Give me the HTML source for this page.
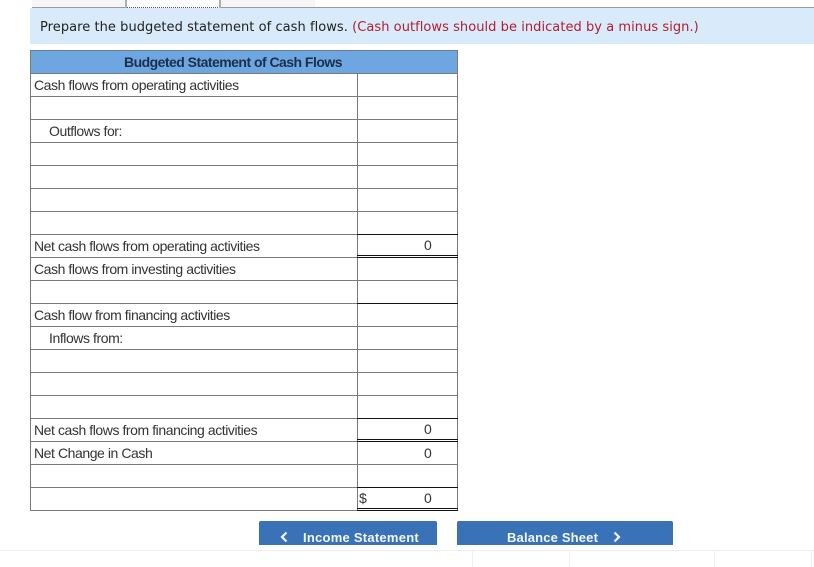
<!DOCTYPE html>
<html><head><meta charset="utf-8">
<style>
html,body{margin:0;padding:0;background:#fff;width:814px;height:567px;overflow:hidden}
div{position:absolute}
.h{height:1px;background:#7a7a7a;left:30px;width:428px}
.hl{height:1px;background:#7a7a7a;left:30px;width:327px}
.k{height:1px;background:#111;left:357px;width:101px}
.v{width:1px;background:#7a7a7a}
.t{font:14px/18px "Liberation Sans",sans-serif;color:#333;white-space:nowrap;letter-spacing:-.43px}
.n{font:14px/18px "Liberation Sans",sans-serif;color:#333;left:424px}
.b{background:#3a72b8;color:#f2f6fb;font:bold 13px/16px "Liberation Sans",sans-serif;white-space:nowrap}
</style></head><body>
<!-- top tabs -->
<div style="left:32px;top:0;width:283px;height:7px;background:#f6f6f6;border-bottom:1px solid #9a9a9a"></div>
<div style="left:126px;top:0;width:94px;height:7px;background:#fff;border-bottom:1px dotted #456"></div>
<div style="left:125px;top:0;width:2px;height:8px;background:#a5b0b0"></div>
<div style="left:219px;top:0;width:2px;height:8px;background:#a5b0b0"></div>
<div style="left:315px;top:7px;width:499px;height:1px;background:#9a9a9a"></div>
<!-- instruction banner -->
<div style="left:30px;top:8px;width:784px;height:36px;background:#d9eafa"></div>
<div style="left:40px;top:19px;height:18px;font:13px/18px 'DejaVu Sans',sans-serif;color:#222;white-space:nowrap;letter-spacing:.05px">Prepare the budgeted statement of cash flows. <span style="color:#b02030">(Cash outflows should be indicated by a minus sign.)</span></div>
<!-- table header -->
<div style="left:30px;top:50px;width:428px;height:24px;background:#6ea6e2"></div>
<div style="left:30px;top:50px;width:428px;height:1px;background:#6a7a8a"></div>
<div class="t" style="left:124px;top:53px;font-weight:bold;color:#1c2f4a;letter-spacing:-.53px">Budgeted Statement of Cash Flows</div>
<!-- grid lines -->
<div class="v" style="left:30px;top:50px;height:461px"></div>
<div class="v" style="left:457px;top:50px;height:461px"></div>
<div class="v" style="left:357px;top:73px;height:438px"></div>
<div class="h" style="top:73px"></div>
<div class="h" style="top:96px"></div>
<div class="h" style="top:119px"></div>
<div class="h" style="top:142px"></div>
<div class="h" style="top:165px"></div>
<div class="h" style="top:188px"></div>
<div class="h" style="top:211px"></div>
<div class="hl" style="top:234px"></div><div class="k" style="top:234px"></div>
<div class="hl" style="top:257px"></div><div class="k" style="top:255px"></div><div class="k" style="top:257px"></div>
<div class="h" style="top:280px"></div>
<div class="hl" style="top:303px"></div><div class="k" style="top:303px"></div>
<div class="h" style="top:326px"></div>
<div class="h" style="top:349px"></div>
<div class="h" style="top:372px"></div>
<div class="h" style="top:395px"></div>
<div class="hl" style="top:418px"></div><div class="k" style="top:418px"></div>
<div class="hl" style="top:441px"></div><div class="k" style="top:439px"></div><div class="k" style="top:441px"></div>
<div class="h" style="top:464px"></div>
<div class="hl" style="top:487px"></div><div class="k" style="top:487px"></div>
<div class="hl" style="top:510px"></div><div class="k" style="top:508px"></div><div class="k" style="top:510px"></div>
<!-- labels -->
<div class="t" style="left:34px;top:76px">Cash flows from operating activities</div>
<div class="t" style="left:49px;top:122px">Outflows for:</div>
<div class="t" style="left:34px;top:237px">Net cash flows from operating activities</div>
<div class="t" style="left:34px;top:260px">Cash flows from investing activities</div>
<div class="t" style="left:34px;top:306px">Cash flow from financing activities</div>
<div class="t" style="left:49px;top:329px">Inflows from:</div>
<div class="t" style="left:34px;top:421px">Net cash flows from financing activities</div>
<div class="t" style="left:34px;top:444px">Net Change in Cash</div>
<!-- values -->
<div class="n" style="top:236px">0</div>
<div class="n" style="top:420px">0</div>
<div class="n" style="top:444px">0</div>
<div class="n" style="top:489px">0</div>
<div class="t" style="left:359px;top:489px">$</div>
<!-- buttons -->
<div class="b" style="left:259px;top:521px;width:178px;height:24px;border-radius:2px 2px 0 0">
<div style="left:44px;top:9px;letter-spacing:.25px">Income Statement</div>
<svg style="position:absolute;left:21px;top:10px" width="8" height="12" viewBox="0 0 8 12"><path d="M6.5 1.5 L2 6 L6.5 10.5" fill="none" stroke="#f2f6fb" stroke-width="2.2"/></svg>
</div>
<div class="b" style="left:457px;top:521px;width:216px;height:24px;border-radius:2px 2px 0 0">
<div style="left:50px;top:9px;letter-spacing:.17px">Balance Sheet</div>
<svg style="position:absolute;left:156px;top:10px" width="8" height="12" viewBox="0 0 8 12"><path d="M1.5 1.5 L6 6 L1.5 10.5" fill="none" stroke="#f2f6fb" stroke-width="2.2"/></svg>
</div>
<!-- bottom faint lines -->
<div style="left:0;top:550px;width:814px;height:1px;background:#f0eeea"></div>
<div style="left:472px;top:551px;width:1px;height:16px;background:#f0f0f0"></div>
<div style="left:569px;top:551px;width:1px;height:16px;background:#f0f0f0"></div>
<div style="left:714px;top:551px;width:1px;height:16px;background:#f0f0f0"></div>
<div style="left:811px;top:551px;width:1px;height:16px;background:#f0f0f0"></div>
</body></html>
